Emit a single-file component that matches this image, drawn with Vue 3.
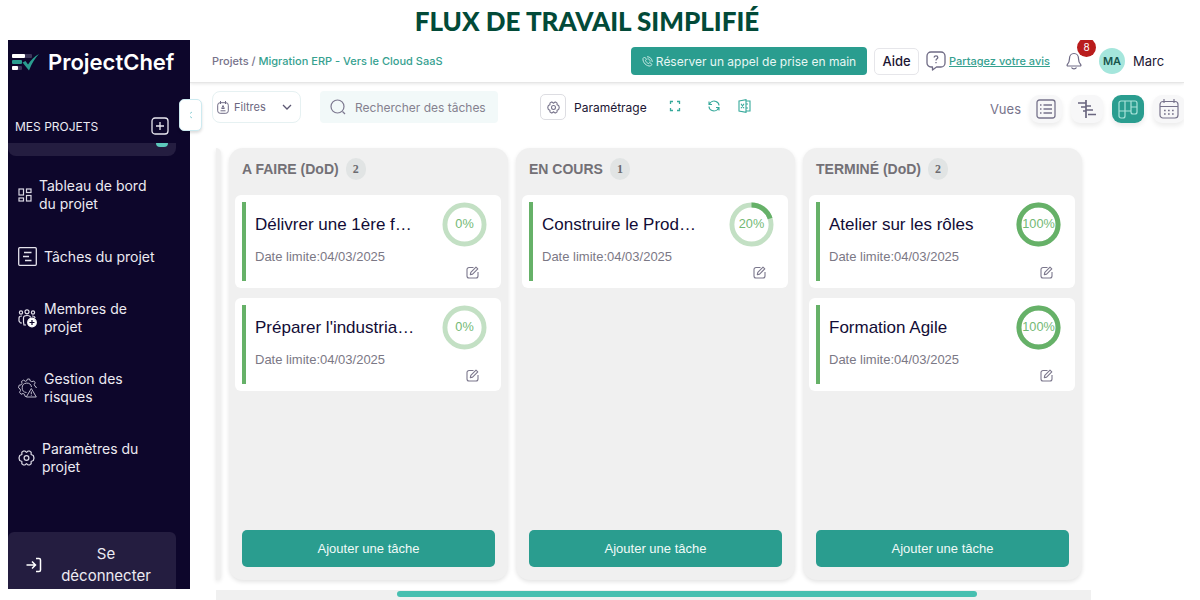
<script setup>
import { ref } from 'vue'

const search = ref('')
const view = ref('board')

const columns = [
  {
    title: 'A FAIRE (DoD)',
    tasks: [
      { title: 'Délivrer une 1ère f…', due: '04/03/2025', progress: 0 },
      { title: "Préparer l'industria…", due: '04/03/2025', progress: 0 },
    ],
  },
  {
    title: 'EN COURS',
    tasks: [{ title: 'Construire le Prod…', due: '04/03/2025', progress: 20 }],
  },
  {
    title: 'TERMINÉ (DoD)',
    tasks: [
      { title: 'Atelier sur les rôles', due: '04/03/2025', progress: 100 },
      { title: 'Formation Agile', due: '04/03/2025', progress: 100 },
    ],
  },
]
</script>

<template>
  <div class="page">
    <h1 class="headline">FLUX DE TRAVAIL SIMPLIFIÉ</h1>
    <div class="shell">
      <aside class="sidebar">
        <div class="brand">
          <svg width="28" height="18" viewBox="0 0 28 18" aria-hidden="true">
            <rect x="0" y="1" width="20" height="4" rx="1" fill="#3b3558" />
            <rect x="0" y="1" width="13" height="4" rx="1" fill="#fff" />
            <rect x="0" y="7" width="10" height="4" rx="1" fill="#2a9d8f" />
            <rect x="0" y="13" width="10" height="4" rx="1" fill="#3b3558" />
            <rect x="0" y="13" width="6" height="4" rx="1" fill="#fff" />
            <path d="M10.500 9.500l3-1.500 2.500 3.500C19 7 22.500 3.500 27 1c-4 4-7 9-10 16.500z" fill="#2a9d8f" />
          </svg>
          <span>ProjectChef</span>
        </div>
        <div class="projects-head">
          <span>MES PROJETS</span>
          <button class="add" aria-label="Ajouter un projet">
            <svg width="18" height="18" viewBox="0 0 18 18" fill="none" stroke="#e8e6ef" stroke-width="1.300">
              <rect x="1" y="1" width="16" height="16" rx="3" />
              <path d="M9 5v8M5 9h8" />
            </svg>
          </button>
        </div>
        <div class="peek"><i></i></div>
        <nav class="nav">
          <a href="#" class="nav-item">
            <svg width="14" height="14" viewBox="0 0 14 14" fill="none" stroke="#d9d7e3" stroke-width="1.200">
              <rect x="1" y="1" width="4.500" height="6" /><rect x="8.500" y="1" width="4.500" height="3.500" />
              <rect x="1" y="10" width="4.500" height="3" /><rect x="8.500" y="7.500" width="4.500" height="5.500" />
            </svg>
            <span>Tableau de bord du projet</span>
          </a>
          <a href="#" class="nav-item">
            <svg width="19" height="19" viewBox="0 0 19 19" fill="none" stroke="#e4e2ec" stroke-width="1.300">
              <rect x="0.700" y="0.700" width="17.600" height="17.600" rx="1" />
              <path d="M6 5.500h7.500M5 9.500h6M7 13.500h6.500" />
            </svg>
            <span>Tâches du projet</span>
          </a>
          <a href="#" class="nav-item">
            <svg width="19" height="19" viewBox="0 0 19 19" fill="none" stroke="#e4e2ec" stroke-width="1.200">
              <circle cx="3" cy="3.500" r="1.600" /><circle cx="9" cy="2.800" r="2" /><circle cx="15" cy="3.500" r="1.600" />
              <path d="M4 14H2.500L1 12V9c0-1.500 1-2 3-2M8 16H6l-.5-3V9c0-1.800 1.500-2.500 3.500-2.500s3.500.700 3.500 2M14 7c2 0 3 .700 3 2" />
              <circle cx="14" cy="13.500" r="4.300" fill="#fff" stroke="#fff" />
              <path d="M14 11v5M11.500 13.500h5" stroke="#0d062b" />
            </svg>
            <span>Membres de projet</span>
          </a>
          <a href="#" class="nav-item">
            <svg width="19" height="20" viewBox="0 0 19 20" fill="none" stroke="#bdbacb" stroke-width="1">
              <path d="M8 18.500l-1-.2-.5-2-1.500-.8-2 .8-1.500-2 1-1.800-.4-1.500-1.600-1.200.6-2.600 2-.3.900-1.500-.5-2 2.200-1.300 1.600 1.200L8.500 3 9.500 1h2l.8 2 1.500.7 2-.7 1.400 1.800-1 1.800.8 1.700 1.200.7V10" />
              <path d="M8.500 14.500A4.700 4.700 0 1 1 13.500 9" />
              <path d="M13.300 10.500l5 8.500h-10zM13.300 13.500v2.800M13.300 17.300v.7" />
            </svg>
            <span>Gestion des risques</span>
          </a>
          <a href="#" class="nav-item">
            <svg width="17" height="16" viewBox="0 0 17 16" fill="none" stroke="#d9d7e3" stroke-width="1.200" stroke-linejoin="round">
              <path d="M5.500 1h1.300l1.700 1.400L10.200 1h1.300l1.700 1.200-.1 2.300 2.200 1L16 8l-.7 2.500-2.200 1 .1 2.300L11.500 15h-1.300l-1.700-1.400L6.800 15H5.500l-1.700-1.200.1-2.300-2.200-1L1 8l.7-2.500 2.200-1-.1-2.300z" />
              <circle cx="8.500" cy="8" r="2.400" />
            </svg>
            <span>Paramètres du projet</span>
          </a>
        </nav>
        <button class="logout">
          <svg width="16" height="16" viewBox="0 0 16 16" fill="none" stroke="#fff" stroke-width="1.500">
            <path d="M0.500 8h9M6 4.500L9.500 8 6 11.500M10 1.500h3a1.500 1.500 0 0 1 1.500 1.500v10a1.500 1.500 0 0 1-1.500 1.500h-3" />
          </svg>
          <span>Se déconnecter</span>
        </button>
        <button class="collapse" aria-label="Réduire le menu">
          <svg width="4" height="8" viewBox="0 0 4 8" fill="none" stroke="#8fd0d6"><path d="M3 1L1 2.500M3 7L1 5.500" /></svg>
        </button>
      </aside>

      <main class="main">
        <header class="topbar">
          <div class="crumbs">Projets / <a href="#">Migration ERP - Vers le Cloud SaaS</a></div>
          <button class="call">
            <svg width="11" height="11" viewBox="0 0 11 11" fill="none" stroke="#d6f0ec" stroke-width="0.900">
              <path d="M1 2.500L2.500 1l2 2.200-1 1.300c.5 1.500 1.500 2.500 3 3l1.300-1L10 8.500 8.500 10C4.500 10.500.5 6.500 1 2.500zM5 .7C8 .7 10.300 3 10.300 6M5.500 2.800c1.500 0 2.700 1.200 2.700 2.700" />
            </svg>
            Réserver un appel de prise en main
          </button>
          <button class="help">Aide</button>
          <a href="#" class="feedback">
            <svg width="20" height="20" viewBox="0 0 20 20" fill="none" stroke="#6f6b85" stroke-width="1.300" stroke-linejoin="round">
              <path d="M5 1h10a4 4 0 0 1 4 4v7a4 4 0 0 1-4 4h-4.500L6.500 19v-3H5a4 4 0 0 1-4-4V5a4 4 0 0 1 4-4z" />
              <path d="M8.200 6.500c0-2.300 3.600-2.300 3.600 0 0 1.300-1.800 1.300-1.800 3M10 11v1.300" />
            </svg>
            <span>Partagez votre avis</span>
          </a>
          <button class="bell" aria-label="Notifications">
            <svg width="16" height="18" viewBox="0 0 16 18" fill="none" stroke="#6f6b85" stroke-width="1.200" stroke-linejoin="round">
              <path d="M8 1.500C5 1.500 3.500 4 3.500 6.500c0 3-.5 4.500-2.300 6.200-.4.800 0 1.300.8 1.300h12c.8 0 1.200-.5.800-1.300-1.800-1.700-2.300-3.200-2.300-6.200C12.500 4 11 1.500 8 1.500zM5.500 15.500c1 1.800 4 1.800 5 0" />
            </svg>
            <span class="count">8</span>
          </button>
          <span class="avatar">MA</span>
          <span class="user">Marc</span>
        </header>

        <div class="toolbar">
          <label class="filter">
            <svg width="12" height="13" viewBox="0 0 12 13" fill="none" stroke="#6f6b85" stroke-width="1">
              <rect x="0.700" y="1.700" width="10.600" height="10.600" rx="2.500" />
              <path d="M3.500 0v3M8.500 0v3M3.500 9.800h5M6 4.500L4.700 7.500h2.600z" />
            </svg>
            <select aria-label="Filtres"><option>Filtres</option></select>
            <svg class="chev" width="10" height="7" viewBox="0 0 10 7" fill="none" stroke="#5c5873" stroke-width="1.300"><path d="M1 1l4 4 4-4" /></svg>
          </label>
          <label class="search">
            <svg width="16" height="16" viewBox="0 0 16 16" fill="none" stroke="#7d7990" stroke-width="1.200"><circle cx="7.500" cy="7.500" r="6.500" /><path d="M12.500 12.500l2.500 2.500" /></svg>
            <input v-model="search" type="text" aria-label="Rechercher des tâches" placeholder="Rechercher des tâches" />
          </label>
          <button class="settings">
            <span class="settings-icon">
              <svg width="13" height="13" viewBox="0 0 17 16" fill="none" stroke="#77738b" stroke-width="1.400" stroke-linejoin="round">
                <path d="M5.500 1h1.300l1.700 1.400L10.200 1h1.300l1.700 1.200-.1 2.300 2.200 1L16 8l-.7 2.500-2.200 1 .1 2.300L11.500 15h-1.300l-1.700-1.400L6.800 15H5.500l-1.700-1.200.1-2.300-2.200-1L1 8l.7-2.500 2.200-1-.1-2.300z" />
                <circle cx="8.500" cy="8" r="2.600" />
              </svg>
            </span>
            <span>Paramétrage</span>
          </button>
          <div class="tools">
            <button aria-label="Plein écran">
              <svg width="12" height="12" viewBox="0 0 12 12" fill="none" stroke="#36a99b" stroke-width="1.300"><path d="M1.500 4V1.500H4M8 1.500h2.500V4M10.500 8v2.500H8M4 10.500H1.500V8" /></svg>
            </button>
            <button aria-label="Actualiser">
              <svg width="12" height="12" viewBox="0 0 12 12" fill="none" stroke="#36a99b" stroke-width="1.100"><path d="M1 1.500v3h3M1.300 4.300C2.500 1.500 5.500.5 8 1.500s3 2.500 3 4M11 10.500v-3H8M10.700 7.700C9.500 10.500 6.500 11.500 4 10.500S1 8 1 6.500" /></svg>
            </button>
            <button aria-label="Exporter vers Excel">
              <svg width="13" height="14" viewBox="0 0 13 14" fill="none" stroke="#36a99b" stroke-width="1.100"><path d="M1 2l7-1.300v12.600L1 12zM8 2h4v10H8M3 4.700l3 4.600M6 4.700L3 9.300M8 5h2M8 9h2" /></svg>
            </button>
          </div>
          <div class="views">
            <span>Vues</span>
            <button :class="{ on: view === 'list' }" aria-label="Liste" @click="view = 'list'">
              <svg width="20" height="20" viewBox="0 0 20 20" fill="none" stroke="#77738b" stroke-width="1.300"><rect x="1" y="1" width="18" height="18" rx="2.500" /><path d="M4 6h1.500M4 10h1.500M4 14h1.500M7.500 6H16M7.500 10H16M7.500 14H16" /></svg>
            </button>
            <button :class="{ on: view === 'gantt' }" aria-label="Gantt" @click="view = 'gantt'">
              <svg width="20" height="18" viewBox="0 0 20 18" fill="none" stroke="#6a667f" stroke-width="1.700"><path d="M9 0v18M1 3h8M4 7h5M6 11h3M9 6h5M9 10h7M11 14.500h8" /></svg>
            </button>
            <button :class="{ on: view === 'board' }" aria-label="Tableau" @click="view = 'board'">
              <svg width="20" height="19" viewBox="0 0 20 19" fill="none" stroke="#a9e3da" stroke-width="1.200"><path d="M3 1h14a2 2 0 0 1 2 2v9a2 2 0 0 1-2 2h-2a2 2 0 0 1-2-2V1M7 1v15a2 2 0 0 1-2 2H3a2 2 0 0 1-2-2V3a2 2 0 0 1 2-2M1 11h6M7 11h6M13 7h6" /></svg>
            </button>
            <button :class="{ on: view === 'calendar' }" aria-label="Calendrier" @click="view = 'calendar'">
              <svg width="20" height="20" viewBox="0 0 20 20" fill="none" stroke="#77738b" stroke-width="1.200"><rect x="1" y="2.500" width="18" height="16.500" rx="3" /><path d="M5 0v4M15 0v4M1 7.500h18" /><path d="M5 11.500h11M5 15h11" stroke-width="1.700" stroke-dasharray="1.700 2.300" /></svg>
            </button>
          </div>
        </div>

        <div class="board">
          <div class="edge"></div>
          <section v-for="col in columns" :key="col.title" class="column">
            <h2>{{ col.title }} <span>{{ col.tasks.length }}</span></h2>
            <article v-for="task in col.tasks" :key="task.title" class="card">
              <div class="info">
                <h3>{{ task.title }}</h3>
                <p>Date limite:{{ task.due }}</p>
              </div>
              <div class="side">
                <svg class="ring" width="45" height="45" viewBox="0 0 46 46" role="img" :aria-label="task.progress + '%'">
                  <circle cx="23" cy="23" r="20" fill="none" stroke="#c3e0c4" stroke-width="5" />
                  <circle
                    v-if="task.progress"
                    cx="23" cy="23" r="20" fill="none" stroke="#66b168" stroke-width="5"
                    pathLength="100" :stroke-dasharray="task.progress + ' 100'" transform="rotate(-90 23 23)"
                  />
                  <text x="23" y="27" text-anchor="middle">{{ task.progress }}%</text>
                </svg>
                <button class="edit" aria-label="Modifier">
                  <svg width="13" height="13" viewBox="0 0 13 13" fill="none" stroke="#7b778c" stroke-width="1.100" stroke-linejoin="round">
                    <path d="M7.500 1.500H3A2 2 0 0 0 1 3.500V10a2 2 0 0 0 2 2h7a2 2 0 0 0 2-2V6M4.300 8.700l.5-2.300L10 1.200l1.800 1.600-5.200 5.300z" />
                  </svg>
                </button>
              </div>
            </article>
            <button class="new">Ajouter une tâche</button>
          </section>
        </div>
        <div class="scroll"><div class="thumb"></div></div>
      </main>
    </div>
  </div>
</template>

<style>
body {
  background: #fff;
}
</style>

<style scoped>
* {
  box-sizing: border-box;
}
button {
  font: inherit;
  color: inherit;
  border: 0;
  padding: 0;
  background: none;
  cursor: pointer;
}
a {
  color: inherit;
  text-decoration: none;
}
svg {
  display: block;
  flex: none;
}
.page {
  min-height: 100vh;
  display: flex;
  flex-direction: column;
  overflow: hidden;
  font-family: Inter, "Open Sans", sans-serif;
  font-size: 12px;
  color: #1b1533;
}
.headline {
  margin: 0;
  padding: 2px 26px 0 0;
  text-align: center;
  font: 900 26px/38px Lato, sans-serif;
  color: #024a38;
}
.shell {
  flex: 1;
  display: flex;
  padding: 0 16px 0 8px;
}
.sidebar {
  position: relative;
  z-index: 1;
  width: 182px;
  flex: none;
  margin-bottom: 11px;
  display: flex;
  flex-direction: column;
  background: #0d062b;
  color: #eceaf2;
}
.brand {
  display: flex;
  align-items: center;
  gap: 8px;
  padding: 7px 0 0 4px;
  font-size: 22px;
  line-height: 30px;
  font-weight: 600;
  color: #fff;
}
.projects-head {
  display: flex;
  align-items: center;
  justify-content: space-between;
  padding: 40px 21px 8px 7px;
}
.peek {
  width: 168px;
  height: 13px;
  background: #241d40;
  border-radius: 0 0 8px 8px;
  padding-left: 148px;
}
.peek i {
  display: block;
  width: 12px;
  height: 4px;
  border-radius: 0 0 6px 6px;
  background: #5cc8bb;
}
.nav {
  padding: 4px 10px 0;
  flex: 1;
}
.nav-item {
  display: flex;
  align-items: center;
  gap: 7px;
  padding: 17px 0;
  font-size: 14px;
  line-height: 18px;
}
.nav-item span {
  max-width: 114px;
}
.logout {
  width: 168px;
  height: 57px;
  display: flex;
  align-items: center;
  gap: 12px;
  padding: 8px 18px 0;
  border-radius: 6px 6px 0 0;
  background: #241d40;
  font-size: 15px;
  line-height: 22px;
}
.logout span {
  flex: 1;
}
.collapse {
  position: absolute;
  right: -12px;
  top: 59px;
  width: 23px;
  height: 32px;
  display: grid;
  place-items: center;
  background: #fff;
  border-radius: 5px;
  border: 1px solid #cdeaf0;
  box-shadow: 0 2px 3px #0002;
}
.main {
  flex: 1;
  min-width: 0;
  display: flex;
  flex-direction: column;
  overflow: hidden;
}
.topbar {
  height: 43px;
  display: flex;
  align-items: center;
  padding: 0 19px 0 22px;
  border-bottom: 1px solid #e6e6e6;
  box-shadow: 0 1px 3px #00000018;
}
.crumbs {
  flex: 1;
  color: #77738b;
  font-size: 11px;
  font-weight: 500;
}
.crumbs a {
  color: #36a190;
}
.call {
  height: 28px;
  width: 236px;
  display: flex;
  align-items: center;
  justify-content: center;
  gap: 3px;
  border-radius: 4px;
  background: #2a9d8f;
  color: #e8f7f4;
  font-size: 12px;
}
.help {
  height: 27px;
  width: 45px;
  margin: 0 7px;
  border: 1px solid #e6e6ea;
  border-radius: 5px;
  font-size: 13px;
  font-weight: 500;
}
.feedback {
  display: flex;
  align-items: center;
  gap: 3px;
  width: 129px;
  color: #36a190;
  font-size: 11px;
  font-weight: 500;
  white-space: nowrap;
}
.feedback span {
  text-decoration: underline;
}
.bell {
  position: relative;
  margin: 0 17px 0 11px;
}
.count {
  position: absolute;
  left: 11px;
  top: -14px;
  width: 19px;
  height: 19px;
  border-radius: 10px;
  background: #b91c1c;
  color: #fff;
  font-size: 10px;
  line-height: 19px;
}
.avatar {
  width: 26px;
  height: 26px;
  border-radius: 50%;
  background: #a5e6dc;
  color: #17554c;
  font-size: 11px;
  font-weight: 600;
  line-height: 26px;
  text-align: center;
}
.user {
  width: 32px;
  margin-left: 8px;
  font-size: 13px;
}
.toolbar {
  display: flex;
  align-items: flex-start;
  padding: 8px 0 25px 22px;
}
.filter,
.search {
  height: 32px;
  display: flex;
  align-items: center;
  border-radius: 8px;
}
.filter {
  width: 89px;
  padding: 0 8px 0 4px;
  gap: 5px;
  border: 1px solid #e6f1f2;
  color: #6b6780;
}
.filter select {
  appearance: none;
  border: 0;
  padding: 0;
  background: none;
  flex: 1;
  min-width: 0;
  font: inherit;
  font-size: 11px;
  color: inherit;
}
.search {
  width: 178px;
  margin-left: 19px;
  padding: 0 10px;
  gap: 9px;
  border-radius: 4px;
  background: #f2f9f9;
}
.search input {
  border: 0;
  padding: 0;
  background: none;
  flex: 1;
  min-width: 0;
  font: inherit;
  outline: 0;
}
.search input::placeholder {
  color: #85818f;
  opacity: 1;
}
.settings {
  display: flex;
  align-items: center;
  gap: 8px;
  margin: 3px 0 0 42px;
  color: #1b1533;
}
.settings-icon {
  width: 26px;
  height: 26px;
  display: grid;
  place-items: center;
  border: 1px solid #dddde2;
  border-radius: 5px;
}
.tools {
  display: flex;
  align-items: center;
  height: 30px;
  margin-left: 22px;
}
.tools button:nth-child(2) {
  margin: 0 18px 0 27px;
}
.views {
  margin-left: auto;
  display: flex;
  align-items: center;
  padding-top: 4px;
  margin-right: -1px;
  color: #77738b;
  font-size: 13px;
}
.views button {
  width: 32px;
  height: 28px;
  margin-left: 9px;
  display: grid;
  place-items: center;
  border-radius: 9px;
  background: #f7f7f8;
  box-shadow: 0 3px 5px #00000014;
}
.views .on {
  background: #2a9d8f;
}
.board {
  flex: 1;
  display: grid;
  grid-template-columns: 5px repeat(3, 1fr);
  gap: 8px;
  margin: 0 93px 0 26px;
  padding: 0 9px 10px 0;
  font-family: "Liberation Sans", Arial, sans-serif;
}
.column,
.edge {
  background: #f0f0f0;
  border-radius: 14px;
  box-shadow: 0 2px 4px #0000001c;
}
.edge {
  border-radius: 0 8px 8px 0;
}
.column {
  display: flex;
  flex-direction: column;
  padding: 10px 7px 13px 6px;
}
.column h2 {
  display: flex;
  align-items: center;
  gap: 7px;
  margin: 0 0 15px 7px;
  font-size: 14px;
  line-height: 22px;
  color: #737076;
}
.column h2 span {
  width: 20px;
  border-radius: 11px;
  background: #e1e4e4;
  text-align: center;
  font: bold 12px/22px "Liberation Serif", serif;
  color: #6b6b70;
}
.card {
  display: flex;
  justify-content: space-between;
  margin-bottom: 10px;
  padding: 7px 14px 7px 7px;
  border-radius: 6px;
  background: #fff;
}
.info {
  height: 79px;
  padding: 13px 0 0 9px;
  border-left: 4px solid #66b168;
}
.info h3 {
  margin: 0;
  font-size: 17px;
  line-height: 20px;
  font-weight: 400;
  color: #120c36;
}
.info p {
  margin: 14px 0 0;
  font-size: 13px;
  line-height: 16px;
  color: #7b7885;
}
.ring text {
  font-size: 13px;
  fill: #73b975;
}
.edit {
  display: block;
  margin: 19px 0 0 24px;
}
.new {
  margin: auto 6px 0 7px;
  height: 37px;
  border-radius: 5px;
  background: #2a9d8f;
  color: #f0faf8;
  font-size: 13px;
}
.scroll {
  height: 10px;
  margin: 0 93px 0 26px;
  padding: 1px 0;
  background: #f0f0f0;
}
.thumb {
  width: 66.300%;
  height: 6px;
  margin-left: 20.700%;
  border-radius: 3px;
  background: #47bfb0;
}
</style>
